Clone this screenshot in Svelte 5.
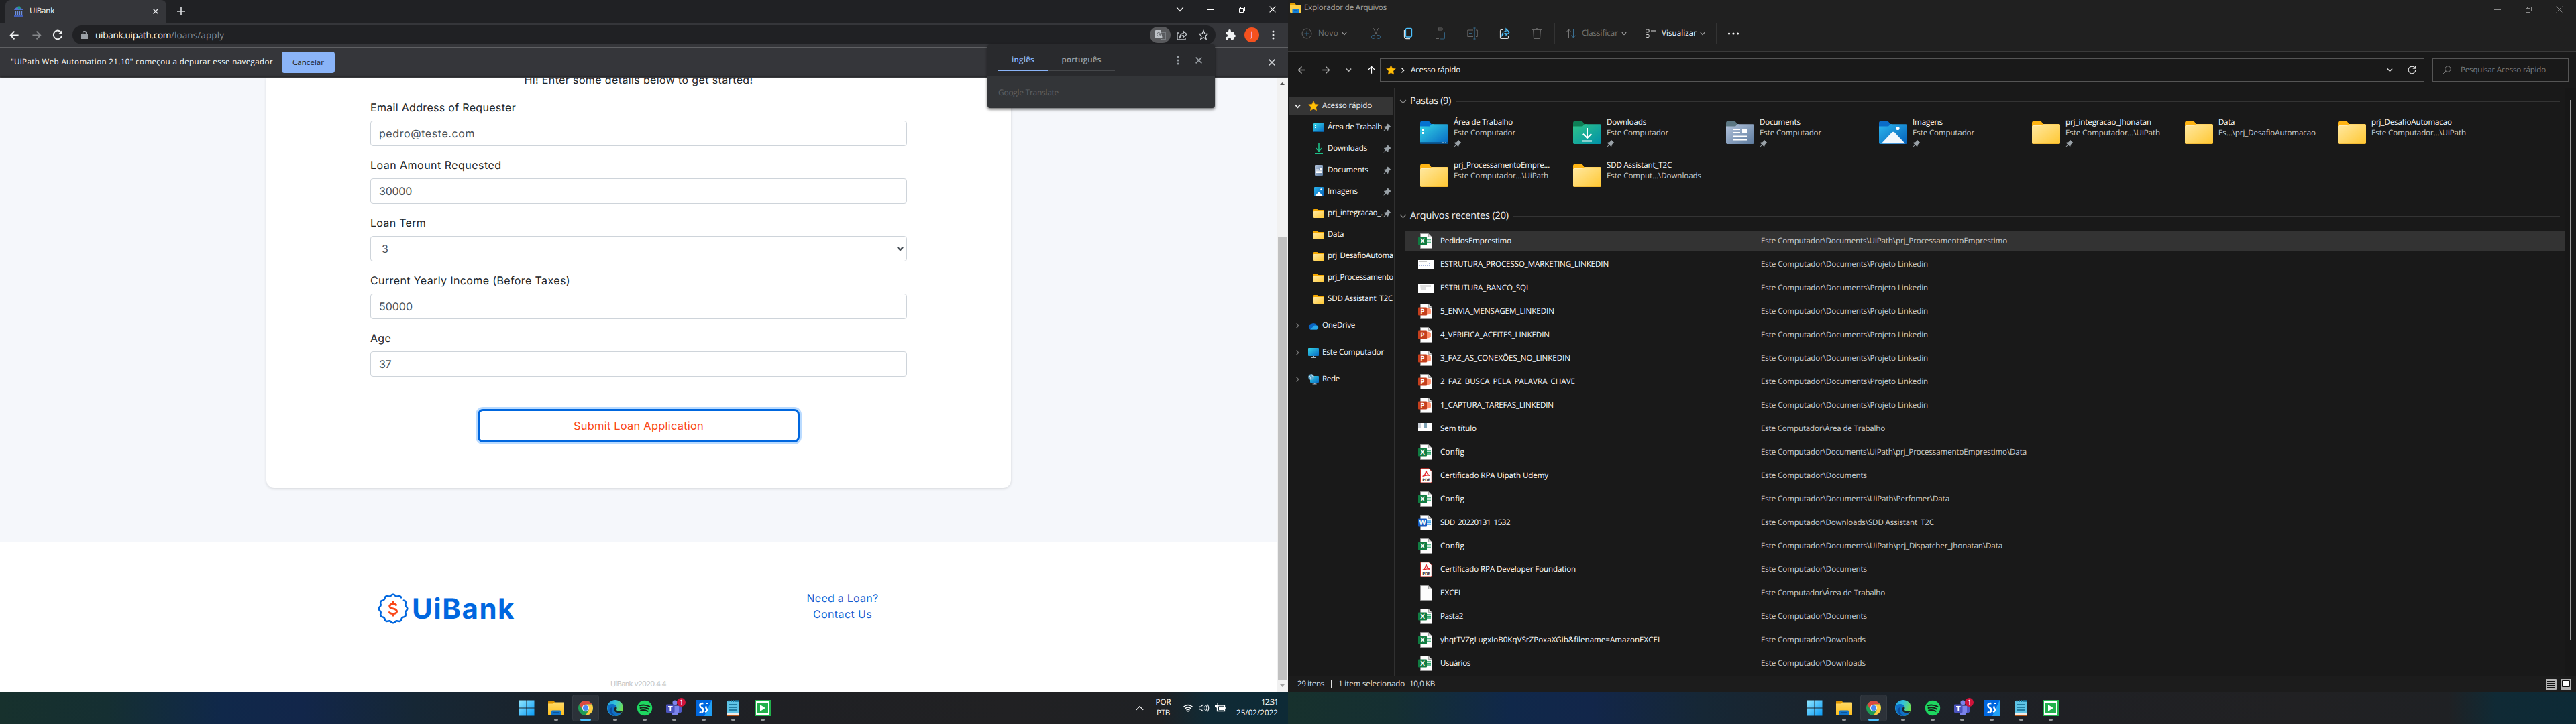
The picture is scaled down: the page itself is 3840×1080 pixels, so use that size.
<script>
  // Tunes letter spacing so a label takes up its designed width.
  function fit(node, width) {
    const natural = node.getBoundingClientRect().width;
    const count = node.textContent.length;
    if (width && count) node.style.letterSpacing = `${(width - natural) / count}px`;
  }

  const fields = [
    { label: 'Email Address of Requester', lw: 217, value: 'pedro@teste.com', vw: 143 },
    { label: 'Loan Amount Requested', lw: 195.5, value: '30000', vw: 49 },
    { label: 'Loan Term', lw: 83, value: '3', vw: 9, select: true },
    { label: 'Current Yearly Income (Before Taxes)', lw: 298, value: '50000', vw: 50 },
    { label: 'Age', lw: 31, value: '37', vw: 18 }
  ];

  const navItems = [
    { icon: 'n-desktop', name: 'Área de Trabalh', w: 81, pin: true },
    { icon: 'n-down', name: 'Downloads', w: 59, pin: true },
    { icon: 'n-doc', name: 'Documents', w: 61, pin: true },
    { icon: 'n-img', name: 'Imagens', w: 45, pin: true },
    { icon: 'n-folder', name: 'prj_integracao_.', w: 82, pin: true },
    { icon: 'n-folder', name: 'Data', w: 24 },
    { icon: 'n-folder', name: 'prj_DesafioAutoma', w: 98 },
    { icon: 'n-folder', name: 'prj_Processamento', w: 98 },
    { icon: 'n-folder', name: 'SDD Assistant_T2C', w: 97 }
  ];

  const navRoots = [
    { icon: 'cloud', name: 'OneDrive', w: 49 },
    { icon: 'pc', name: 'Este Computador', w: 92 },
    { icon: 'net', name: 'Rede', w: 26 }
  ];

  const folders = [
    { kind: 'desktop', name: 'Área de Trabalho', w: 88, loc: 'Este Computador', lw: 92, pin: true },
    { kind: 'down', name: 'Downloads', w: 59, loc: 'Este Computador', lw: 92, pin: true },
    { kind: 'doc', name: 'Documents', w: 61, loc: 'Este Computador', lw: 92, pin: true },
    { kind: 'img', name: 'Imagens', w: 45, loc: 'Este Computador', lw: 92, pin: true },
    { kind: 'plain', name: 'prj_integracao_Jhonatan', w: 128, loc: 'Este Computador...\\UiPath', lw: 141, pin: true },
    { kind: 'plain', name: 'Data', w: 24, loc: 'Es...\\prj_DesafioAutomacao', lw: 145 },
    { kind: 'plain', name: 'prj_DesafioAutomacao', w: 120, loc: 'Este Computador...\\UiPath', lw: 141 },
    { kind: 'plain', name: 'prj_ProcessamentoEmpre...', w: 143, loc: 'Este Computador...\\UiPath', lw: 141 },
    { kind: 'plain', name: 'SDD Assistant_T2C', w: 97, loc: 'Este Comput...\\Downloads', lw: 141 }
  ];

  const pc = 'Este Computador\\';
  const linkedin = [pc + 'Documents\\Projeto Linkedin', 249];
  const documents = [pc + 'Documents', 158];
  const downloads = [pc + 'Downloads', 156];
  const desktop = [pc + 'Área de Trabalho', 185];
  const files = [
    ['xls', 'PedidosEmprestimo', 106, [pc + 'Documents\\UiPath\\prj_ProcessamentoEmprestimo', 367]],
    ['thumb1', 'ESTRUTURA_PROCESSO_MARKETING_LINKEDIN', 251, linkedin],
    ['thumb2', 'ESTRUTURA_BANCO_SQL', 134, linkedin],
    ['ppt', '5_ENVIA_MENSAGEM_LINKEDIN', 170, linkedin],
    ['ppt', '4_VERIFICA_ACEITES_LINKEDIN', 163, linkedin],
    ['ppt', '3_FAZ_AS_CONEXÕES_NO_LINKEDIN', 194, linkedin],
    ['ppt', '2_FAZ_BUSCA_PELA_PALAVRA_CHAVE', 201, linkedin],
    ['ppt', '1_CAPTURA_TAREFAS_LINKEDIN', 169, linkedin],
    ['thumb3', 'Sem título', 54, desktop],
    ['xls', 'Config', 36, [pc + 'Documents\\UiPath\\prj_ProcessamentoEmprestimo\\Data', 396]],
    ['pdf', 'Certificado RPA Uipath Udemy', 161, documents],
    ['xls', 'Config', 36, [pc + 'Documents\\UiPath\\Perfomer\\Data', 281]],
    ['doc', 'SDD_20220131_1532', 104, [pc + 'Downloads\\SDD Assistant_T2C', 258]],
    ['xls', 'Config', 36, [pc + 'Documents\\UiPath\\prj_Dispatcher_Jhonatan\\Data', 360]],
    ['pdf', 'Certificado RPA Developer Foundation', 202, documents],
    ['blank', 'EXCEL', 33, desktop],
    ['xls', 'Pasta2', 34, documents],
    ['xls', 'yhqtTVZgLugxIoB0KqVSrZPoxaXGib&filename=AmazonEXCEL', 330, downloads],
    ['xls', 'Usuários', 45, downloads]
  ];
  const office = {
    xls: { letter: 'X', fill: '#107c41', lines: '#21a366' },
    ppt: { letter: 'P', fill: '#c43e1c', lines: '#ff8f6b' },
    doc: { letter: 'W', fill: '#185abd', lines: '#41a5ee' }
  };

  const apps = ['win', 'explorer', 'chrome', 'edge', 'spotify', 'teams', 'studio', 'notepad', 'assistant'];

  // Scalloped outline of the bank's seal, open at the upper right.
  let seal = '';
  for (let a = -38; a <= 306; a += 2) {
    const t = (a * Math.PI) / 180;
    const r = 20.2 + 1.1 * Math.cos(12 * t);
    seal += `${seal ? 'L' : 'M'}${(23 + r * Math.cos(t)).toFixed(2)} ${(23 + r * Math.sin(t)).toFixed(2)}`;
  }
</script>

{#snippet text(value, width, cls = '')}<span class="t {cls}" use:fit={width}>{value}</span>{/snippet}

{#snippet cross(size, sw = 1)}
  <svg width={size} height={size} viewBox="0 0 10 10" fill="none" stroke="currentColor" stroke-width={sw}><path d="M.6.6 9.4 9.4M9.4.6.6 9.4" /></svg>
{/snippet}
{#snippet chevron(size = 8, sw = 1.2)}
  <svg width={size} height={size} viewBox="0 0 8 8" fill="none" stroke="currentColor" stroke-width={sw}><path d="M.8 2.2 4 5.6 7.2 2.2" /></svg>
{/snippet}
{#snippet right()}
  <svg width="8" height="8" viewBox="0 0 8 8" fill="none" stroke="currentColor" stroke-width="1.3"><path d="M2.4.6 5.8 4 2.4 7.4" /></svg>
{/snippet}
{#snippet kebab()}
  <svg width="4" height="14" viewBox="0 0 4 14" fill="currentColor"><circle cx="2" cy="2" r="1.5" /><circle cx="2" cy="7" r="1.5" /><circle cx="2" cy="12" r="1.5" /></svg>
{/snippet}
{#snippet star(size)}
  <svg width={size} height={size} viewBox="0 0 16 16"><path d="M8 .8 10.2 5.4 15.3 6 11.5 9.5 12.5 14.8 8 12.2 3.5 14.8 4.5 9.5.7 6 5.8 5.4Z" fill="#ffc107" stroke="#f0a000" stroke-width=".7" /></svg>
{/snippet}
{#snippet pin()}
  <svg width="12" height="12" viewBox="0 0 12 12" fill="#9aa2a8"><path d="M6.7.5 11.5 5.2 10.2 6 9.6 6 7.7 8.2 7.5 10.3 6.6 11 4.2 8.6 1 11.6.3 11.2 3.2 7.7 1 5.4 1.8 4.6 4 4.4 6.1 2.4 6 1.4Z" /></svg>
{/snippet}
{#snippet arrow(dir, size = 16, sw = 1.9)}
  <svg class={dir} width={size} height={size} viewBox="0 0 16 16" fill="none" stroke="currentColor" stroke-width={sw}><path d="M14.5 8H2M8 1.8 1.8 8 8 14.2" /></svg>
{/snippet}
{#snippet restore()}
  <svg width="11" height="11" viewBox="0 0 11 11" fill="none" stroke="currentColor"><path d="M1.5 3.5h6v6h-6zM3.500 3.500v-2h6v6h-2" /></svg>
{/snippet}

{#snippet navIcon(name)}
  {#if name === 'n-desktop'}
    <svg width="16" height="13" viewBox="0 0 16 13"><rect width="16" height="13" rx="1" fill="url(#gDesk)" /><path d="M2 2.5h1.4v1.6H2zM2 5.5h1.4v1.6H2z" fill="#fff" /><path d="M0 11h16v1a1 1 0 0 1-1 1H1a1 1 0 0 1-1-1z" fill="#0b5a94" /></svg>
  {:else if name === 'n-down'}
    <svg width="16" height="16" viewBox="0 0 16 16" fill="none" stroke="#1fbf88" stroke-width="1.6"><path d="M8 0v11M3.5 7 8 11.5 12.5 7" /><path d="M2 15h12" stroke-width="2" /></svg>
  {:else if name === 'n-doc'}
    <svg width="16" height="16" viewBox="0 0 16 16"><rect x="2" width="12" height="16" rx="1.3" fill="url(#gDoc)" /><path d="M4 4.5h4M4 7h4M4 9.2h8M4 11.4h8" stroke="#fff" stroke-width="1.2" /><rect x="9" y="4" width="3" height="3.5" fill="#fff" /></svg>
  {:else if name === 'n-img'}
    <svg width="16" height="14" viewBox="0 0 16 14"><rect x="1" width="14" height="14" rx="1" fill="url(#gImg)" /><path d="M2 13.5 8 7l6 6.5z" fill="#fff" /><circle cx="11.5" cy="3.5" r="1.2" fill="#fff" /></svg>
  {:else if name === 'n-folder'}
    <svg width="16" height="13" viewBox="0 0 16 13"><path d="M0 1a1 1 0 0 1 1-1h4.6L7.4 2H15a1 1 0 0 1 1 1v4H0z" fill="#f5a800" /><rect y="3" width="16" height="10" rx="1" fill="url(#gFold)" /></svg>
  {:else if name === 'cloud'}
    <svg width="16" height="11" viewBox="0 0 16 11"><path d="M4 10.5a3.6 3.6 0 0 1-.6-7A5 5 0 0 1 12.4 4 3.4 3.4 0 0 1 12.6 10.5z" fill="#0a64c2" /><path d="M3 10.5 9.6 4.6l4 .3a3 3 0 0 1-.8 5.6z" fill="#28a8ea" /></svg>
  {:else if name === 'pc'}
    <svg width="16" height="15" viewBox="0 0 16 15"><rect width="16" height="12" rx="1" fill="url(#gDesk)" /><path d="M7 12h2v2h2.5v1h-7v-1H7z" fill="#a8b4bc" /></svg>
  {:else}
    <svg width="16" height="16" viewBox="0 0 16 16"><rect x="3" y="3" width="13" height="10" rx="1" fill="url(#gDesk)" /><path d="M9 13h1.6v1.6h2v1h-6v-1H9z" fill="#a8b4bc" /><circle cx="4.6" cy="4.6" r="4.4" fill="#5ea9cf" /><path d="M1.5 2.5Q4.6 4 4 8.6M5 .4Q6 4 9 4.4" stroke="#d7eef8" fill="none" /></svg>
  {/if}
{/snippet}

{#snippet folderIcon(kind)}
  <svg class="folder" width="42" height="34" viewBox="0 0 42 34">
    {#if kind === 'desktop'}
      <path d="M0 2a2 2 0 0 1 2-2h10.5q1.4 0 2.2 1.2L16.4 4H20v10H0z" fill="#0572cf" /><path d="M0 7.5h14l3-3.2h23a2 2 0 0 1 2 2V32a2 2 0 0 1-2 2H2a2 2 0 0 1-2-2z" fill="url(#gDesk)" />
      <path d="M3 11h2.6v3H3zM3 16h2.6v3H3z" fill="#fff" /><path d="M0 31.2h42v.8a2 2 0 0 1-2 2H2a2 2 0 0 1-2-2z" fill="#0a4f86" /><path d="M33 31.5h2v1.5h-2zM37 31.5h2v1.5h-2z" fill="#bfe3f7" />
    {:else if kind === 'down'}
      <path d="M0 2a2 2 0 0 1 2-2h10.5q1.4 0 2.2 1.2L16.4 4H20v10H0z" fill="#0e7f56" /><path d="M0 7.5h14l3-3.2h23a2 2 0 0 1 2 2V32a2 2 0 0 1-2 2H2a2 2 0 0 1-2-2z" fill="url(#gDown)" />
      <path d="M21 10v15M14.8 18.8 21 25l6.2-6.2M14 29.4h14" stroke="#fff" stroke-width="2" fill="none" />
    {:else if kind === 'doc'}
      <path d="M0 2a2 2 0 0 1 2-2h10.5q1.4 0 2.2 1.2L16.4 4H20v10H0z" fill="#5c7783" /><path d="M0 7.5h14l3-3.2h23a2 2 0 0 1 2 2V32a2 2 0 0 1-2 2H2a2 2 0 0 1-2-2z" fill="url(#gDoc)" />
      <path d="M11 12h10M11 17h10M11 22.5h20M11 27.5h20" stroke="#fff" stroke-width="2" /><rect x="24" y="11" width="7" height="7" rx="1" fill="#fff" />
    {:else if kind === 'img'}
      <path d="M0 2a2 2 0 0 1 2-2h10.5q1.4 0 2.2 1.2L16.4 4H20v10H0z" fill="#0a6cc8" /><path d="M0 7.5h14l3-3.2h23a2 2 0 0 1 2 2V32a2 2 0 0 1-2 2H2a2 2 0 0 1-2-2z" fill="url(#gImg)" />
      <path d="M3.5 33.2 19.2 16.6q2-1.800 4 0L39 33.2z" fill="#f0f7fd" /><circle cx="28" cy="10.5" r="2.6" fill="#fff" />
    {:else}
      <path d="M0 2a2 2 0 0 1 2-2h10.5q1.4 0 2.2 1.2L16.4 4H40a2 2 0 0 1 2 2v6H0z" fill="#ffb412" /><path d="M1 6h15v4H1z" fill="#fff4d8" /><path d="M0 7.8q0-1.2 1.4-1.2H14l3-2.300h23a2 2 0 0 1 2 2V32a2 2 0 0 1-2 2H2a2 2 0 0 1-2-2z" fill="url(#gFold)" /><path d="M.6 33h40.8" stroke="#e9a820" />
    {/if}
  </svg>
{/snippet}

{#snippet fileIcon(kind)}
  {#if office[kind]}
    <svg width="21" height="23" viewBox="0 0 21 23">
      <path d="M3.5.5h12L20.500 5.500v17h-17z" fill="#fdfdfd" stroke="#9a9a9a" stroke-width=".8" /><path d="M15.500.5v5h5z" fill="#d5d5d5" stroke="#777" stroke-width=".6" />
      <path d="M13 9h6M13 11.500h6M13 14h6" stroke={office[kind].lines} stroke-width="1.500" />
      {#if kind === 'ppt'}<circle cx="14" cy="11.500" r="5" fill="#ff8f6b" />{/if}
      <rect y="5.500" width="13" height="12" rx="1" fill={office[kind].fill} />
      <text x="6.500" y="15" text-anchor="middle" class="letter">{office[kind].letter}</text>
    </svg>
  {:else if kind === 'pdf'}
    <svg width="21" height="23" viewBox="0 0 21 23">
      <path d="M5 .7h11L20.300 5v15.500a1.500 1.500 0 0 1-1.500 1.500H5a1.500 1.500 0 0 1-1.500-1.500v-18A1.500 1.500 0 0 1 5 .7z" fill="#fff" stroke="#b5201a" />
      <path d="M6.500 12.500Q11 10.500 11.600 5q.2-1.400 .8 0 .2 4.500 5.300 6.300-5-1.300-11.200 1.200z" fill="none" stroke="#e5252a" stroke-width="1.300" /><text x="12" y="19.800" text-anchor="middle" class="pdf">PDF</text>
    </svg>
  {:else if kind === 'blank'}
    <svg width="21" height="23" viewBox="0 0 21 23"><path d="M3.500.5h12L20.500 5.500v17h-17z" fill="#fdfdfd" stroke="#9a9a9a" stroke-width=".8" /><path d="M15.500.5v5h5z" fill="#d5d5d5" stroke="#777" stroke-width=".6" /></svg>
  {:else if kind === 'thumb1'}
    <svg width="24" height="14" viewBox="0 0 24 14"><path d="M0 0h24v14H0z" fill="#fff" /><path d="M1 2h12" stroke="#c8c8c8" stroke-width="2" /><path d="M1 8h14M16 5h3M16 8h3" stroke="#8aa0d8" stroke-width="1.500" stroke-dasharray="2 1" /></svg>
  {:else if kind === 'thumb2'}
    <svg width="24" height="14" viewBox="0 0 24 14"><path d="M0 0h24v14H0z" fill="#fff" /><path d="M3 2h16v3H11v4H4z" fill="#dedede" /></svg>
  {:else}
    <svg class="lift" width="21" height="12" viewBox="0 0 21 12"><path d="M0 0h21v12H0z" fill="#fff" /><path d="M0 0h4v7H0z" fill="#c9ced6" /><path d="M8 0h5v8H8z" fill="#7fa3b5" /></svg>
  {/if}
{/snippet}

{#snippet appIcon(name)}
  {#if name === 'win'}
    <svg width="24" height="24" viewBox="0 0 24 24" fill="url(#gWin)"><path d="M.5.5h11v11H.5zM12.500.5h11v11h-11zM.5 12.500h11v11H.5zM12.500 12.500h11v11h-11z" /></svg>
  {:else if name === 'explorer'}
    <svg width="24" height="22" viewBox="0 0 24 22"><path d="M0 1.500Q0 0 1.500 0H8l2.500 2.500V6H0z" fill="#dc9300" /><path d="M0 4.500h7.500L10 2.500h13q1 0 1 1V20.500q0 1-1 1H1q-1 0-1-1z" fill="url(#gFold2)" /><path d="M4.500 21.500V16.500q0-2 2-2h11q2 0 2 2v5z" fill="#1374c9" /><path d="M8 18h8" stroke="#0a4a8a" stroke-width="1.500" /></svg>
  {:else if name === 'chrome'}
    <svg width="24" height="24" viewBox="0 0 24 24"><circle cx="12" cy="12" r="11" fill="#1f9d55" /><path d="M2.500 6.500A11 11 0 0 1 21.500 6.500H12L7.200 14.700z" fill="#db4a3f" /><path d="M21.500 6.500A11 11 0 0 1 12 23l4.800-8.200L12 6.500z" fill="#ffcd40" /><circle cx="12" cy="12" r="5.200" fill="#f4f4f4" /><circle cx="12" cy="12" r="4.100" fill="#4a89f3" /></svg>
  {:else if name === 'edge'}
    <svg width="24" height="24" viewBox="0 0 24 24"><circle cx="12" cy="12" r="12" fill="url(#gEdge)" /><path d="M.2 10Q3 5.500 8.500 6 14 6.500 14.600 11.500 12 9.500 10.400 12.500 9 17 14 19q4 1.200 8-.8Q18 24.500 10.500 23.900 1 22.500.2 10z" fill="#0f6fc6" /><path d="M8 10.500Q4.500 18 12.500 24 4.500 22.500 3.600 16 3.600 12 8 10.500z" fill="#0c4f9e" /><path d="M14.600 11.500Q14.500 14 13.800 14.800 14.800 17 19 16.600l4.500 0-1.500 1.600Q16 20.500 12 17.800 9 15 10.400 12.500 12 9.500 14.600 11.500z" fill="#1c232b" /></svg>
  {:else if name === 'spotify'}
    <svg width="24" height="24" viewBox="0 0 24 24"><circle cx="12" cy="12" r="11.200" fill="#1ed760" /><path d="M4.800 8.300q7.500-2.200 14.600 1.600M5.500 12q6.500-1.800 12.500 1.500M6.200 15.500q5.400-1.400 10.400 1.300" fill="none" stroke="#17221b" stroke-width="2" stroke-linecap="round" /></svg>
  {:else if name === 'teams'}
    <svg width="24" height="24" viewBox="0 0 24 24"><circle cx="13" cy="4" r="3.600" fill="#7b83eb" /><path d="M16 9h7.500v6.500a4.500 4.500 0 0 1-7.500 3.400z" fill="#5059c9" /><path d="M7 8.500h12v8.500a6 6 0 0 1-12 0z" fill="#7b83eb" /><rect y="6.500" width="12.500" height="12.500" rx="1.200" fill="#4b53bc" /><path d="M3 9.800h6.600M6.300 9.800V16" stroke="#fff" stroke-width="1.800" /></svg>
  {:else if name === 'studio'}
    <svg width="24" height="24" viewBox="0 0 24 24"><path d="M0 0h24v24H0z" fill="#0067df" /><path d="M24 0v24H13z" fill="#21a0f5" /><path d="M11.500 5.200Q6 4.600 6.300 8q.2 2.400 2.800 3.700 2.600 1.400 2.200 3.900-.4 2.600-2.800 2.900M16.800 4.300v1.800M16.300 9.500q-2 1.500.2 3.800 1.600 2.300-2.300 5" fill="none" stroke="#fff" stroke-width="2.500" /><circle cx="7" cy="18.600" r="1.500" fill="#fff" /></svg>
  {:else if name === 'notepad'}
    <svg width="24" height="24" viewBox="0 0 24 24"><path d="M3 2h18v18H3z" fill="#5fc4e6" /><path d="M3 20h18v2H3z" fill="#f3ece6" /><path d="M3 22h18v2H3z" fill="#b5571a" /><path d="M5.500 0v3M9 0v3M12.500 0v3M16 0v3M19 0v3" stroke="#16779f" stroke-width="1.500" /><path d="M6 7h12M6 11h12M6 15h12" stroke="#11658c" stroke-width="1.600" /></svg>
  {:else}
    <svg width="24" height="24" viewBox="0 0 24 24"><path d="M0 0h24v24H0z" fill="#22b14c" /><path d="M3 3h18v18H3z" fill="none" stroke="#fff" stroke-width="2" /><path d="M8 7v10l8-5z" fill="#fff" /></svg>
  {/if}
{/snippet}

{#snippet taskbar(tray)}
  <div class="taskbar">
    {#each apps as app}
      <div class="app" class:active={app === 'chrome'}>
        {@render appIcon(app)}
        {#if app !== 'win'}<i class="run"></i>{/if}
        {#if app === 'teams'}<b class="badge">1</b>{/if}
      </div>
    {/each}
    {#if tray}
      <div class="tray">
        <svg width="12" height="8" viewBox="0 0 12 8" fill="none" stroke="#fff" stroke-width="1.200"><path d="M.8 6.800 6 1.500 11.200 6.800" /></svg>
        <div class="lang">{@render text('POR', 23)}{@render text('PTB', 20)}</div>
        <svg class="wifi" width="16" height="12" viewBox="0 0 16 12" fill="none" stroke="#fff" stroke-width="1.300"><path d="M1 4.500q7-6 14 0M3.200 7q4.800-4 9.600 0M5.400 9.300q2.600-2 5.200 0" /><circle cx="8" cy="10.800" r="1" fill="#fff" stroke="none" /></svg>
        <svg class="sound" width="16" height="14" viewBox="0 0 16 14" fill="none" stroke="#fff" stroke-width="1.100"><path d="M.6 5v4h2.400L6.500 12V2L3 5zM8.500 4.500q2 2.500 0 5M10.600 3q3 4 0 8M12.800 1.500q4 5.500 0 11" /></svg>
        <svg class="battery" width="17" height="14" viewBox="0 0 17 14"><path d="M3.500 3h11v8.500h-11z" fill="none" stroke="#fff" stroke-width="1.300" /><path d="M6 4.700h7v5.200H6zM15.200 5.500h1.400v3.600h-1.400zM0 2.500h5.500v2.500L4 6.500H1.500L0 5zM1 0h1v3H1zM3.500 0h1v3h-1z" fill="#fff" /></svg>
        <div class="clock">{@render text('12:31', 25)}{@render text('25/02/2022', 62)}</div>
      </div>
    {/if}
  </div>
{/snippet}

<svg class="defs" width="0" height="0">
  <defs>
    <linearGradient id="gDesk" x1="0" y1="0" x2="1" y2="1"><stop offset="0" stop-color="#35d5e5" /><stop offset="1" stop-color="#0667c4" /></linearGradient>
    <linearGradient id="gDown" x1="0" y1="0" x2="1" y2="1"><stop offset="0" stop-color="#2fc48a" /><stop offset="1" stop-color="#0091a8" /></linearGradient>
    <linearGradient id="gDoc" x1="0" y1="0" x2="1" y2="1"><stop offset="0" stop-color="#b4c4dc" /><stop offset="1" stop-color="#5d7b9e" /></linearGradient>
    <linearGradient id="gImg" x1="0" y1="0" x2="1" y2="1"><stop offset="0" stop-color="#2bb5ee" /><stop offset="1" stop-color="#0460b8" /></linearGradient>
    <linearGradient id="gFold" x1="0" y1="0" x2="1" y2="1"><stop offset="0" stop-color="#ffe9a3" /><stop offset="1" stop-color="#ffc731" /></linearGradient>
    <linearGradient id="gFold2" x1="0" y1="0" x2="0" y2="1"><stop offset="0" stop-color="#ffd967" /><stop offset="1" stop-color="#ffc01e" /></linearGradient>
    <linearGradient id="gWin" x1="0" y1="0" x2="1" y2="1"><stop offset="0" stop-color="#8fe6ff" /><stop offset="1" stop-color="#0a9bf5" /></linearGradient>
    <linearGradient id="gEdge" x1="0" y1="0" x2="1" y2=".4"><stop offset="0" stop-color="#1f9ce0" /><stop offset=".5" stop-color="#33c2dc" /><stop offset="1" stop-color="#6fe04f" /></linearGradient>
  </defs>
</svg>

<div class="desktop">
  <section class="monitor">
    <div class="browser">
      <div class="tabs">
        <div class="tab">
          <svg width="16" height="16" viewBox="0 0 16 16"><path d="M1 6Q2.500 2 7 1.500L14 4.500V6z" fill="#5272d0" /><path d="M6 1 9 0l2 2-1.500 3.500L7 4z" fill="#1c9a83" /><path d="M3.500 7v6M6.500 7v6M9.500 7v6M12.500 7v6" stroke="#6d8fe0" stroke-width="1.400" /><path d="M1 15h14" stroke="#4464c4" stroke-width="1.800" /></svg>
          {@render text('UiBank', 37, 'white')}
          <span class="tab-close">{@render cross(8, 1.700)}</span>
        </div>
        <svg class="plus" width="12" height="12" viewBox="0 0 12 12" stroke="#d5d7da" stroke-width="1.700"><path d="M6 0v12M0 6h12" /></svg>
        <div class="winbtns light">
          <span>{@render chevron(12, .9)}</span>
          <span><svg width="10" height="1"><path d="M0 .5h10" stroke="currentColor" /></svg></span>
          <span>{@render restore()}</span>
          <span>{@render cross(10, 1.100)}</span>
        </div>
      </div>
      <div class="toolbar">
        <span class="ic">{@render arrow('left', 15)}</span>
        <span class="ic dim fwd">{@render arrow('right', 15)}</span>
        <span class="ic reload"><svg width="16" height="16" viewBox="0 0 16 16" fill="none" stroke="currentColor" stroke-width="1.900"><path d="M13.200 4.300A6.300 6.300 0 1 0 14.200 9" /><path d="M14.800.8v6H8.900z" fill="currentColor" stroke="none" /></svg></span>
        <div class="omni">
          <svg width="10" height="12" viewBox="0 0 10 12"><path d="M0 5h10v7H0z" fill="#9aa0a6" /><path d="M2.500 5V3a2.500 2.500 0 0 1 5 0v2" fill="none" stroke="#9aa0a6" stroke-width="1.300" /></svg>
          <div class="url">{@render text('uibank.uipath.com', 113, 'white')}{@render text('/loans/apply', 79)}</div>
          <div class="omni-actions">
            <span class="chip"><svg width="16" height="15" viewBox="0 0 16 15"><path d="M1 0h7l3 12H1a1 1 0 0 1-1-1V1a1 1 0 0 1 1-1z" fill="#bdc1c6" /><path d="M9 3h6v11H9.500L8 12" fill="none" stroke="#9aa0a6" /><path d="M7.400 4.800A2.600 2.600 0 1 0 7.400 7.400V6.200H5.400M10 6.500h4.500M12.200 5v1.500M13.500 7q-1 3-3 4M11 8q1 2.500 3 3.500" fill="none" stroke="#5b5e62" /></svg></span>
            <svg class="share" width="16" height="15" viewBox="0 0 16 15" fill="none" stroke="#bdc1c6" stroke-width="1.400"><path d="M3 4H1v10h12v-3" /><path d="M4.500 11Q5 5 10 4.700V1.500L15.200 6 10 10.300V7.600Q7 7.500 4.500 11z" /></svg>
            <svg width="16" height="16" viewBox="0 0 16 16" fill="none" stroke="#d0d3d7" stroke-width="1.400"><path d="M8 1.800 9.900 6.100 14.500 6.500 11 9.600 12.100 14.200 8 11.700 3.900 14.200 5 9.600 1.500 6.500 6.100 6.100Z" /></svg>
          </div>
        </div>
        <svg class="puzzle" width="16" height="16" viewBox="0 0 16 16" fill="#f1f3f4"><path d="M14 7.500h-1V4.200Q13 3 11.800 3H8.900V1.900a1.900 1.900 0 0 0-3.800 0V3H2.300Q1 3 1 4.200V7h1.100a2 2 0 0 1 0 4H1v2.800Q1 15 2.300 15H5v-1a2 2 0 0 1 4 0v1h2.800q1.200 0 1.200-1.200v-2.500h1a1.900 1.900 0 0 0 0-3.800z" /></svg>
        <span class="avatar">J</span>
        <span class="menu">{@render kebab()}</span>
      </div>
      <div class="infobar">
        {@render text('"UiPath Web Automation 21.10" começou a depurar esse navegador', 391, 'white')}
        <button class="cancel">{@render text('Cancelar', 47)}</button>
        <span class="info-close">{@render cross(10, 1.600)}</span>
      </div>
      <div class="viewport">
        <div class="page">
          <div class="gray">
            <form class="card">
              <p class="intro">{@render text('Hi! Enter some details below to get started!', 341)}</p>
              {#each fields as f}
                <div class="field">
                  <div class="label">{@render text(f.label, f.lw)}</div>
                  <div class="control" class:select={f.select}>
                    {@render text(f.value, f.vw)}
                    {#if f.select}{@render chevron(10, 2)}{/if}
                  </div>
                </div>
              {/each}
              <button class="submit" type="button">{@render text('Submit Loan Application', 194)}</button>
            </form>
          </div>
          <footer>
            <div class="foot-row">
              <div class="logo">
                <svg width="46" height="46" viewBox="0 0 46 46" fill="none"><path d={seal} stroke="#0067df" stroke-width="2.600" stroke-linecap="round" /><path d="M28.300 18.500q-1.500-2.800-5.300-2.800t-5.300 3.200q0 2.900 5.300 4t5.600 4.200q-.3 3.400-5.600 3.400t-5.800-3.300M23 12v4M23 30v4.500" stroke="#fa4616" stroke-width="2.900" /></svg>
                {@render text('UiBank', 154, 'brand')}
              </div>
              <nav class="links">{@render text('Need a Loan?', 107)}{@render text('Contact Us', 88)}</nav>
            </div>
            <div class="version">{@render text('UiBank v2020.4.4', 83)}</div>
          </footer>
        </div>
        <div class="scroll">
          <svg width="7" height="4" viewBox="0 0 7 4"><path d="M0 4 3.500 0 7 4z" fill="#505050" /></svg>
          <i class="thumb"></i>
          <svg width="7" height="4" viewBox="0 0 7 4"><path d="M0 0h7L3.500 4z" fill="#a3a3a3" /></svg>
        </div>
      </div>
      <div class="translate">
        <div class="tr-head">
          <span class="lang-tab on">{@render text('inglês', 34)}</span>
          <span class="lang-tab">{@render text('português', 59)}</span>
          <span class="tr-menu">{@render kebab()}</span>
          {@render cross(10, 1.500)}
        </div>
        <div class="tr-body">{@render text('Google Translate', 90)}</div>
      </div>
    </div>
    {@render taskbar(true)}
  </section>

  <section class="monitor">
    <div class="explorer">
      <div class="title">
        <svg width="17" height="15" viewBox="0 0 17 15"><path d="M0 1.500Q0 .3 1 .3h5.500L8.500 2.500V5H0z" fill="#e5a000" /><path d="M0 3h16q1 0 1 1v10q0 1-1 1H1q-1 0-1-1z" fill="#ffcf45" /><path d="M3.500 15V10.500q0-1 1-1h8q1 0 1 1V15z" fill="#1380d8" /><path d="M6 12h5" stroke="#0a4f92" /></svg>
        {@render text('Explorador de Arquivos', 123)}
        <div class="winbtns dimmed">
          <span><svg width="10" height="1"><path d="M0 .5h10" stroke="currentColor" /></svg></span>
          <span>{@render restore()}</span>
          <span>{@render cross(10, .9)}</span>
        </div>
      </div>
      <div class="commands">
        <div class="cmd new off">
          <svg width="16" height="16" viewBox="0 0 16 16" fill="none"><circle cx="8" cy="8" r="7" stroke="#666" /><path d="M8 4.500v7M4.500 8h7" stroke="#33607e" stroke-width="1.200" /></svg>
          {@render text('Novo', 30)}{@render chevron()}
        </div>
        <i class="vsep"></i>
        <div class="tools">
          <svg width="16" height="18" viewBox="0 0 16 18" fill="none" stroke="#666"><path d="M4 1 10.500 12M12 1 5.500 12" /><circle cx="4" cy="14" r="2.600" stroke="#33607e" /><circle cx="12" cy="14" r="2.600" stroke="#33607e" /></svg>
          <svg width="16" height="18" viewBox="0 0 16 18" fill="none" stroke-width="1.300"><rect x="4.500" y="1.500" width="9" height="12.500" rx="1.500" stroke="#4cc2ff" /><path d="M2.500 4v9.500q0 3 3 3h5.500" stroke="#ddd" /></svg>
          <svg width="16" height="18" viewBox="0 0 16 18" fill="none" stroke="#666"><path d="M5 2.500H1.500v14H6M11 2.500h2.500V6M5 1h6v3H5z" /><rect x="7.500" y="6.500" width="7" height="10.500" rx="1" stroke="#33607e" /></svg>
          <svg width="16" height="18" viewBox="0 0 16 18" fill="none" stroke="#666"><path d="M9 4H.8v9.500H9M13 4h2.300v9.500H13" /><path d="M11 1v16M9.500 1h3M9.500 17h3M3 8.800h5" stroke="#33607e" stroke-width="1.400" /></svg>
          <svg width="16" height="18" viewBox="0 0 16 18" fill="none" stroke-width="1.200"><path d="M6 3.500H3q-1.500 0-1.500 1.500v10q0 1.500 1.500 1.500h9q1.500 0 1.500-1.500V13" stroke="#ddd" /><path d="M4 12q.5-6.500 6-6.500V2l5 5-5 4.500V8.500Q6.500 8.300 4 12z" stroke="#4cc2ff" /></svg>
          <svg width="16" height="18" viewBox="0 0 16 18" fill="none" stroke="#666"><path d="M1 3.500h14M6 3.500q0-2 2-2t2 2M2.500 3.500 3.500 16.500h9l1-13M6.500 7v6M9.500 7v6" /></svg>
        </div>
        <i class="vsep s2"></i>
        <div class="cmd sort off">
          <svg width="16" height="14" viewBox="0 0 16 14" fill="none"><path d="M4.500 13V1M1 4.500 4.500 1 8 4.500" stroke="#777" /><path d="M11.500 1v12M8.500 9.500l3 3.500 3.500-3.500" stroke="#3a6f92" /></svg>
          {@render text('Classificar', 54)}{@render chevron()}
        </div>
        <div class="cmd view">
          <svg width="16" height="14" viewBox="0 0 16 14" fill="none" stroke="#ddd"><rect x=".6" y="1" width="4.500" height="4" rx="1" /><rect x=".6" y="8.500" width="4.500" height="4" rx="1" /><path d="M8 3h8M8 10.500h8" stroke-width="1.200" /></svg>
          {@render text('Visualizar', 52, 'white')}{@render chevron()}
        </div>
        <i class="vsep s3"></i>
        <svg class="more" width="18" height="4" viewBox="0 0 18 4" fill="#fff"><circle cx="2.500" cy="2" r="1.600" /><circle cx="9" cy="2" r="1.600" /><circle cx="15.500" cy="2" r="1.600" /></svg>
      </div>
      <div class="address">
        <div class="moves">
          {@render arrow('left', 13, 1.700)}{@render arrow('right', 13, 1.700)}{@render chevron(9, 1.500)}<span class="white">{@render arrow('up', 13, 1.500)}</span>
        </div>
        <div class="path">
          {@render star(15)}<span class="crumb">{@render right()}</span>{@render text('Acesso rápido', 74, 'white')}
          <span class="path-end">{@render chevron(9, 1.200)}<svg width="13" height="13" viewBox="0 0 16 16" fill="none" stroke="currentColor" stroke-width="1.500"><path d="M13.500 4.500A6.500 6.500 0 1 0 14.500 8M14 .5v4.500H9.500" /></svg></span>
        </div>
        <div class="search">
          <svg width="13" height="13" viewBox="0 0 13 13" fill="none" stroke="#777"><circle cx="8" cy="5" r="4.200" /><path d="M5 8 .7 12.300" /></svg>
          {@render text('Pesquisar Acesso rápido', 127)}
        </div>
      </div>
      <div class="split">
        <div class="nav">
          <div class="nav-sel">{@render chevron(9, 1.600)}{@render star(16)}{@render text('Acesso rápido', 74)}</div>
          {#each navItems as n}
            <div class="nav-item">
              {@render navIcon(n.icon)}
              <span class="nav-name" class:pinned={n.pin}>{@render text(n.name, n.w)}</span>
              {#if n.pin}{@render pin()}{/if}
            </div>
          {/each}
          <div class="roots">
            {#each navRoots as n}
              <div class="root">{@render right()}{@render navIcon(n.icon)}{@render text(n.name, n.w)}</div>
            {/each}
          </div>
        </div>
        <div class="content">
          <div class="group">{@render chevron(11, .9)}{@render text('Pastas (9)', 61, 'gtitle')}<i class="rule"></i></div>
          <div class="folders">
            {#each folders as f}
              <div class="fcell">
                {@render folderIcon(f.kind)}
                <div class="ftext">
                  {@render text(f.name, f.w, 'white')}{@render text(f.loc, f.lw)}
                  {#if f.pin}{@render pin()}{/if}
                </div>
              </div>
            {/each}
          </div>
          <div class="group recent">{@render chevron(11, .9)}{@render text('Arquivos recentes (20)', 147, 'gtitle')}<i class="rule"></i></div>
          <div class="files">
            {#each files as [kind, name, w, [loc, lw]], i}
              <div class="file" class:sel={i === 0}>
                <span class="ficon">{@render fileIcon(kind)}</span>
                <span class="fname">{@render text(name, w, 'white')}</span>
                {@render text(loc, lw)}
              </div>
            {/each}
          </div>
        </div>
        <div class="vscroll"><i></i></div>
      </div>
      <div class="status">
        {@render text('29 itens', 40)}<i></i>{@render text('1 item selecionado', 99)}{@render text('10,0 KB', 38, 'size')}<i></i>
        <div class="views">
          <svg width="16" height="16" viewBox="0 0 16 16"><rect width="16" height="16" rx="1" fill="#b4b4b4" /><path d="M2 3.500h12M2 6.500h12M2 9.500h12M2 12.500h12" stroke="#111" /></svg>
          <svg width="16" height="16" viewBox="0 0 16 16"><rect width="16" height="16" rx="1" fill="#b4b4b4" /><path d="M2.500 2.500h11v9h-11z" fill="#fff" stroke="#111" /><path d="M2 13.500h12" stroke="#111" /></svg>
        </div>
      </div>
    </div>
    {@render taskbar(false)}
  </section>
</div>

<style>
  :global(body) { margin: 0; background: #191919; }
  .defs { position: absolute; }
  svg { display: block; flex: none; }
  .desktop { display: grid; grid-template-columns: 1920px 1920px; width: 3840px; height: 1080px; overflow: hidden; font: 11.600px/16px 'Open Sans', 'Noto Sans', sans-serif; text-rendering: geometricPrecision; }
  .monitor { display: flex; flex-direction: column; height: 1080px; }
  .t { flex: none; white-space: pre; display: inline-block; }
  .white { color: #fff; }
  .left { transform: none; }
  .right { transform: rotate(180deg); }
  .up { transform: rotate(90deg); }

  /* browser */
  .browser { position: relative; height: 1032px; display: flex; flex-direction: column; background: #35363a; overflow: hidden; }
  .tabs { display: flex; height: 34px; background: #202124; padding-left: 8px; align-items: center; }
  .tab { display: flex; align-items: center; gap: 8px; width: 240px; height: 34px; padding: 0 12px; box-sizing: border-box; background: #35363a; border-radius: 8px 8px 0 0; }
  .tab-close { margin-left: auto; color: #e8eaed; }
  .plus { margin-left: 16px; }
  .winbtns { display: flex; margin-left: auto; align-self: flex-start; }
  .winbtns span { width: 46px; height: 28px; display: flex; align-items: center; justify-content: center; }
  .light { color: #fff; }
  .toolbar { display: flex; align-items: center; height: 36px; padding-left: 13px; color: #f1f3f4; }
  .ic { width: 16px; display: flex; justify-content: center; }
  .dim { color: #85878a; }
  .fwd { margin-left: 17px; }
  .reload { margin-left: 16px; }
  .omni { display: flex; align-items: center; margin-left: 14px; width: 1704px; height: 28px; border-radius: 14px; background: #202124; box-sizing: border-box; padding: 0 10px 0 13px; }
  .url { display: flex; margin-left: 11px; font-size: 13.500px; line-height: 20px; color: #8b8e92; }
  .omni-actions { display: flex; align-items: center; margin-left: auto; }
  .chip { display: flex; align-items: center; justify-content: center; width: 31px; height: 24px; border-radius: 12px; background: #58595c; }
  .share { margin: 0 16px 0 9px; }
  .puzzle { margin-left: 14px; }
  .avatar { margin-left: 13px; width: 22px; height: 22px; border-radius: 50%; background: #f4511e; text-align: center; line-height: 22px; }
  .menu { margin-left: 19px; }
  .infobar { display: flex; align-items: center; height: 46px; border-top: 1px solid #5f6063; box-sizing: border-box; padding: 0 19px 0 16px; border-bottom: 1px solid #55565a; }
  .cancel { border: 0; margin: 0 0 0 13px; padding: 0; width: 79px; height: 32px; border-radius: 4px; background: #8ab4f8; color: #202124; font: inherit; }
  .info-close { margin-left: auto; color: #d0d3d7; }
  .viewport { display: flex; height: 916px; box-shadow: 0 -1px 3px #0008; }
  .page { width: 1903px; background: #fff; font-family: Inter, Lato, sans-serif; }
  .gray { height: 692px; background: #f5f7fb; overflow: hidden; }
  .card { margin-left: 397px; width: 1110px; height: 612px; box-sizing: border-box; padding: 0 155px; background: #fff; border-radius: 0 0 12px 12px; box-shadow: 0 1px 4px rgba(0, 0, 0, .14); display: flex; flex-direction: column; color: #212529; font-size: 16px; line-height: 24px; overflow: hidden; }
  .intro { margin: -9px 0 17px; display: flex; justify-content: center; }
  .field { margin-bottom: 16px; }
  .label { height: 24px; margin-bottom: 8px; }
  .control { height: 38px; box-sizing: border-box; border: 1px solid #ced4da; border-radius: 4px; display: flex; align-items: center; justify-content: space-between; padding: 0 12px; color: #495057; font-size: 16px; }
  .select { padding: 0 4px 0 16px; }
  .submit { align-self: center; margin: 32px 0 0; width: 480px; height: 50px; box-sizing: border-box; border: 3px solid #0067df; border-radius: 8px; background: #fff; box-shadow: 0 0 0 3px rgba(0, 123, 255, .27); color: #fa4616; font: 16.500px/24px Inter, Lato, sans-serif; padding: 0; }
  footer { height: 224px; overflow: hidden; display: flex; flex-direction: column; }
  .foot-row { display: flex; height: 204px; }
  .logo { display: flex; margin: 77px 0 0 563px; }
  .brand { margin-left: 5px; font: 700 42px/47px Inter, Lato, sans-serif; color: #0067df; }
  .links { display: flex; flex-direction: column; align-items: center; width: 110px; margin: 72px 0 0 433px; font-size: 16px; line-height: 24px; color: #1360d2; }
  .version { display: flex; justify-content: center; font-size: 11px; line-height: 24px; color: #c4c4c4; }
  .scroll { width: 17px; background: #f1f1f1; display: flex; flex-direction: column; align-items: center; padding: 7px 0; box-sizing: border-box; }
  .thumb { width: 13px; height: 661px; background: #c1c1c1; margin: 227px 0 6px; }

  /* translate bubble floats over the page */
  .translate { position: absolute; left: 1472px; top: 66px; width: 339px; height: 95px; border-radius: 4px; background: #333538; box-shadow: 0 2px 4px #0009; overflow: hidden; }
  .tr-head { display: flex; height: 48px; box-sizing: border-box; padding: 8px 19px 0 16px; background: #292a2d; border-bottom: 1px solid #3c4043; color: #9aa0a6; font-weight: 600; align-items: center; }
  .lang-tab { display: flex; justify-content: center; height: 32px; width: 100px; border-bottom: 1px solid #45474a; align-self: flex-start; box-sizing: border-box; line-height: 32px; }
  .lang-tab.on { width: 74px; color: #8ab4f8; border-bottom: 2px solid #8ab4f8; }
  .tr-menu { margin: 0 24px 0 auto; }
  .tr-head > :global(svg), .tr-menu { position: relative; top: -4px; }
  .tr-body { padding: 16px; font-size: 12px; color: #606265; }

  /* taskbar */
  .taskbar { display: flex; gap: 4px; height: 48px; box-sizing: border-box; padding: 4px 15px 4px 765px; background: linear-gradient(90deg, #17312d 0, #152f32 160px, #10284a 330px, #12264a 450px, #162735 620px, #1b232b 820px, #1f2024 1150px, #212123 1500px, #1f2124 1730px, #102a35 1800px, #0d2a36 1920px); }
  .app { position: relative; width: 40px; height: 40px; display: flex; align-items: center; justify-content: center; border-radius: 4px; }
  .active { background: #ffffff12; box-shadow: inset 0 0 0 1px #ffffff0c; }
  .run { position: absolute; left: 17px; bottom: 1px; width: 6px; height: 3px; border-radius: 2px; background: #96989b; }
  .active .run { left: 12px; width: 16px; background: #4cc2ff; }
  .badge { position: absolute; left: 24px; top: 5px; width: 13px; height: 13px; border-radius: 50%; background: #d0143a; color: #fff; font: 10px/13px 'Open Sans', sans-serif; text-align: center; }
  .tray { display: flex; align-items: center; margin-left: auto; color: #fff; }
  .lang { display: flex; flex-direction: column; align-items: center; margin-left: 17px; width: 24px; }
  .wifi { margin-left: 17px; }
  .sound { margin-left: 8px; }
  .battery { margin-left: 8px; }
  .clock { display: flex; flex-direction: column; align-items: flex-end; margin-left: 15px; }

  /* file explorer */
  .explorer { height: 1032px; display: flex; flex-direction: column; background: #191919; color: #d5d5d5; }
  .title { display: flex; gap: 4px; align-items: flex-start; height: 28px; padding-left: 3px; background: #202020; color: #a5a5a5; }
  .title > :global(svg) { margin-top: 4px; }
  .title > :global(.t) { margin-top: 4px; }
  .dimmed { color: #8a8a8a; }
  .title .winbtns { margin-right: 2px; }
  .commands { display: flex; align-items: center; height: 49px; box-sizing: border-box; padding: 0 0 4px 20px; background: #202020; border-bottom: 1px solid #3a3a3a; }
  .cmd { display: flex; align-items: center; color: #a5a5a5; }
  .cmd > :global(svg:last-child) { margin-left: 5px; }
  .off > :global(.t) { color: #777; }
  .new :global(.t) { margin-left: 9px; }
  .vsep { width: 1px; height: 32px; background: #333; margin-left: 16px; }
  .tools { display: flex; gap: 32px; margin-left: 18px; }
  .s2 { margin-left: 18px; }
  .sort { margin-left: 16px; }
  .sort :global(.t) { margin-left: 8px; }
  .view { margin-left: 28px; }
  .view :global(.t) { margin-left: 8px; }
  .more { margin-left: 16px; }
  .address { display: flex; align-items: center; height: 55px; padding-left: 14px; }
  .moves { display: flex; align-items: center; gap: 23px; width: 123px; color: #b0b0b0; }
  .path { display: flex; align-items: center; box-sizing: border-box; width: 1557px; height: 35px; border: 1px solid #555; padding: 0 11px 0 8px; }
  .crumb { margin: 0 8px 0 6px; color: #fff; }
  .path-end { display: flex; gap: 22px; margin-left: auto; align-items: center; color: #ddd; }
  .search { display: flex; align-items: center; gap: 14px; margin-left: 12px; box-sizing: border-box; width: 203px; height: 35px; border: 1px solid #555; padding-left: 14px; color: #7d7d7d; }
  .split { display: flex; height: 877px; }
  .nav { width: 159px; box-sizing: border-box; padding-top: 12px; border-right: 1px solid #303030; color: #fff; }
  .nav-sel { display: flex; align-items: center; margin: 0 1px 2px 2px; height: 28px; padding-left: 8px; background: #353535; color: #eee; }
  .nav-sel > :global(svg:nth-child(2)) { margin: 0 5px 0 11px; }
  .nav-item { display: flex; align-items: center; height: 32px; padding-left: 38px; }
  .nav-name { margin-left: 5px; flex: 1; display: flex; }
  .pinned { flex: none; width: 83px; }
  .roots { padding-top: 4px; }
  .root { display: flex; align-items: center; gap: 5px; height: 40px; padding-left: 10px; color: #fff; }
  .root > :global(svg:first-child) { margin-right: 7px; color: #777; }
  .content { width: 1744px; padding-top: 7px; box-sizing: border-box; color: #d0d0d0; }
  .group { display: flex; align-items: center; height: 24px; padding: 0 7px 0 7px; color: #888; }
  .gtitle { margin-left: 5px; font-size: 14.500px; line-height: 20px; color: #f0f0f0; }
  .rule { height: 1px; flex: 1; margin-left: 7px; background: #333; }
  .folders { display: grid; grid-template-columns: repeat(7, 228px); grid-auto-rows: 64px; margin: 12px 0 7px 38px; }
  .fcell { display: flex; gap: 8px; }
  .folder { margin-top: 6px; }
  .ftext { display: flex; flex-direction: column; align-items: flex-start; }
  .ftext > :global(svg) { margin-top: 1px; }
  .files { margin: 10px 0 0 15px; display: flex; flex-direction: column; gap: 4px; }
  .file { display: flex; align-items: center; height: 31px; padding-left: 20px; }
  .sel { background: #333; }
  .ficon { width: 33px; }
  .fname { width: 478px; }
  .lift { margin-bottom: 6px; }
  .letter { font: 700 10px 'Open Sans', sans-serif; fill: #fff; }
  .pdf { font: 700 6px 'Open Sans', sans-serif; fill: #222; }
  .vscroll { width: 17px; background: #171717; }
  .vscroll i { display: block; width: 2px; height: 806px; margin: 17px 0 0 8px; background: #9a9a9a; }
  .status { display: flex; align-items: center; height: 23px; padding: 0 7px 0 14px; background: #1c1c1c; color: #e0e0e0; }
  .status i { width: 1px; height: 11px; background: #e0e0e0; margin: 0 10px; }
  .size { margin-left: 7px; }
  .views { display: flex; gap: 6px; margin-left: auto; }
</style>
